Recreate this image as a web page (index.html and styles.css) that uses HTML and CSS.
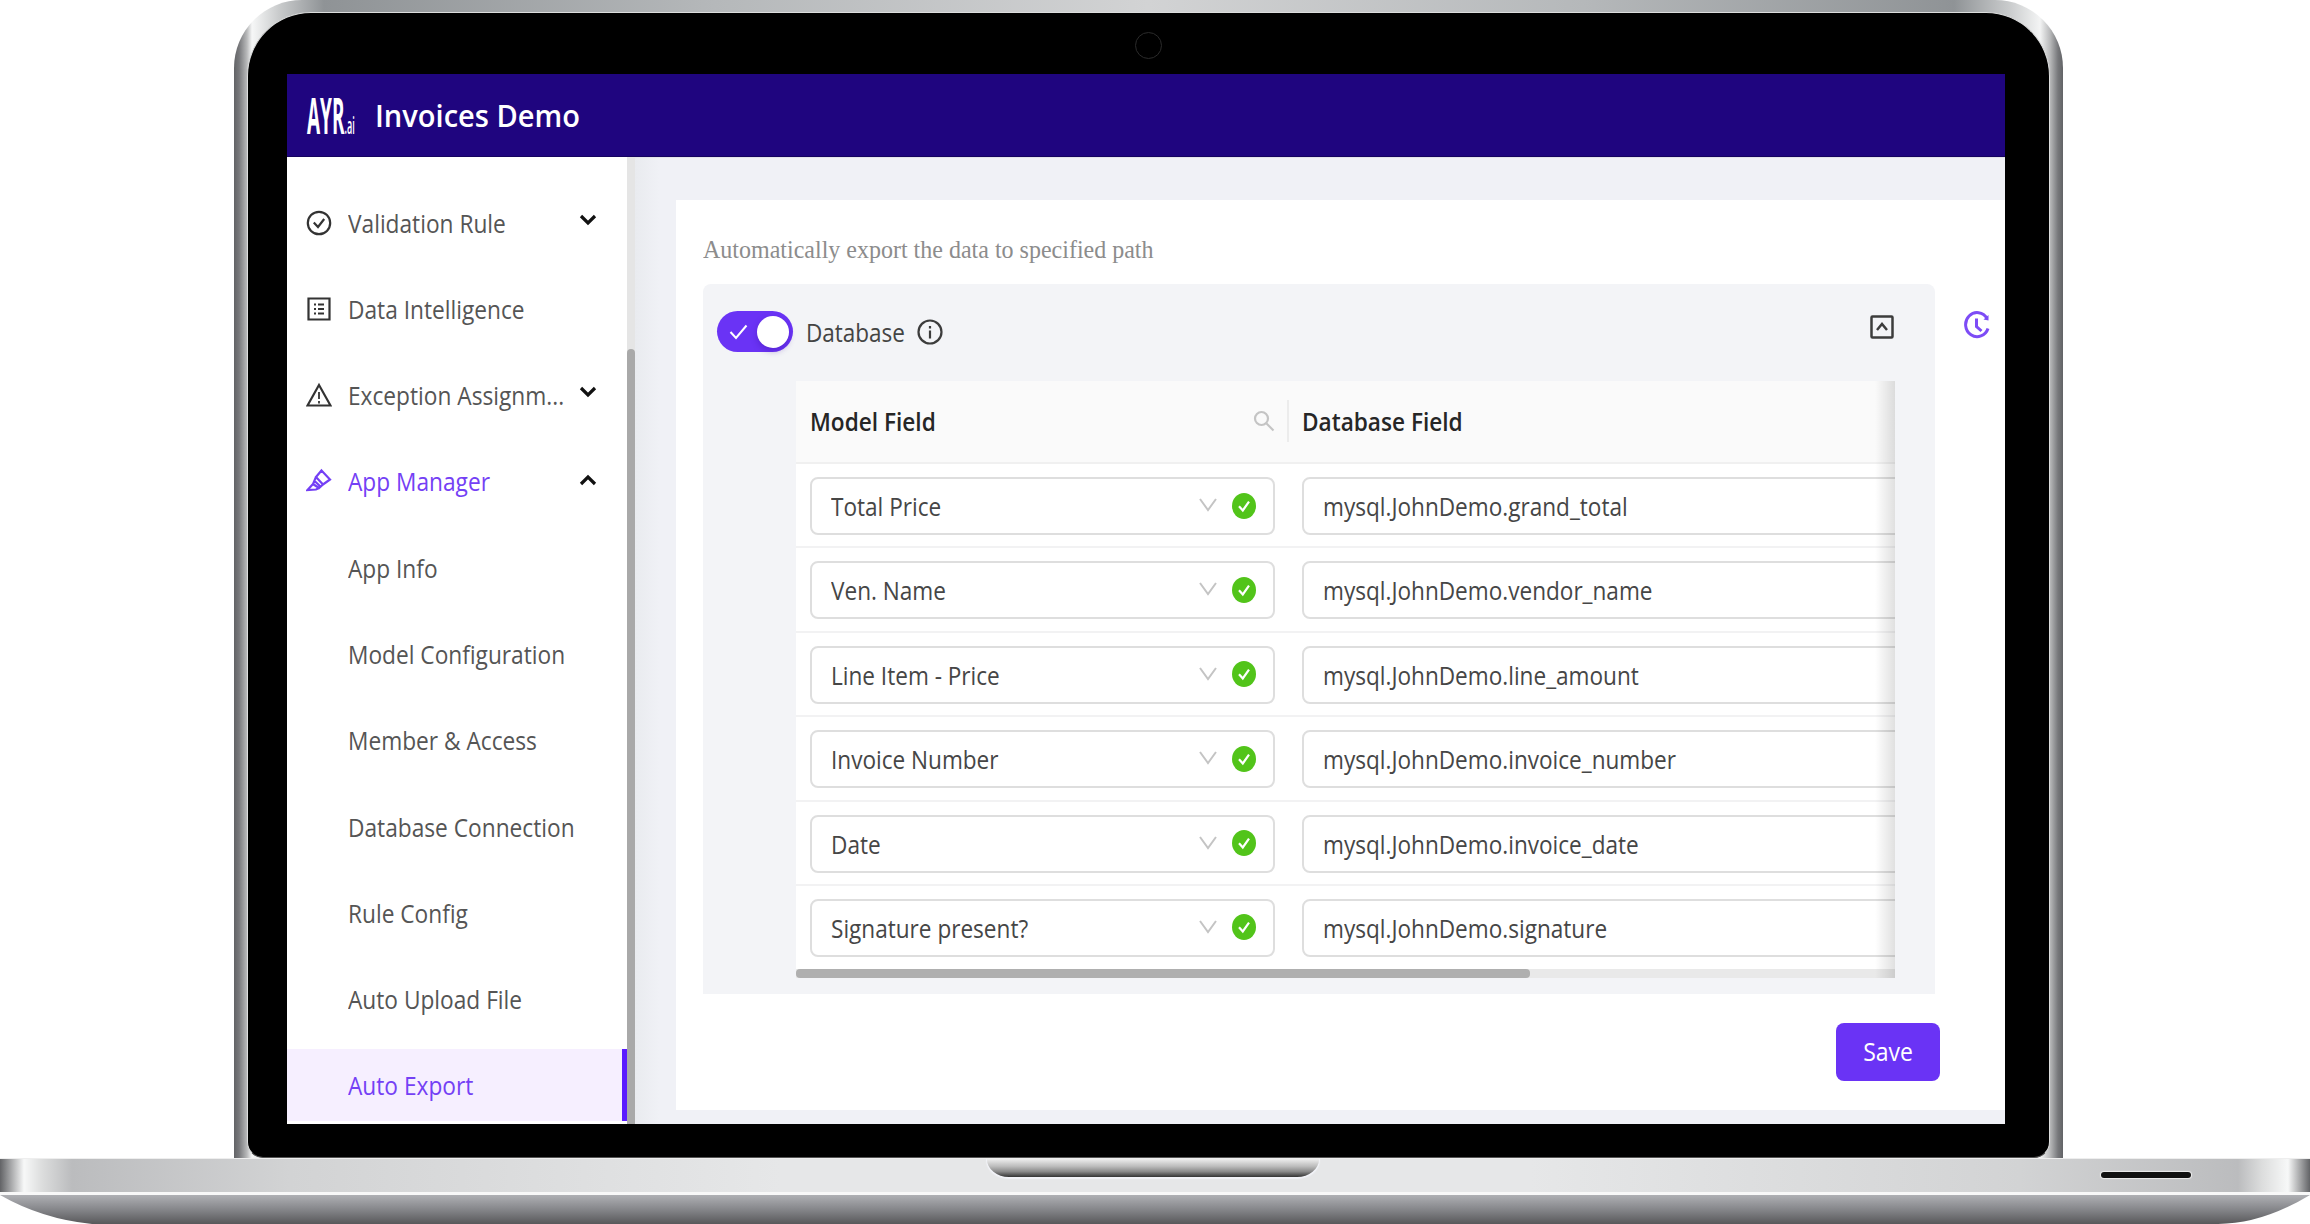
FILE: index.html
```html
<!DOCTYPE html>
<html lang="en">
<head>
<meta charset="utf-8">
<title>Invoices Demo</title>
<link rel="stylesheet" href="styles.css">
</head>
<body>
<svg class="defs" width="0" height="0">
  <symbol id="down" viewBox="0 0 18 14"><path d="M1 1 9 12 17 1" fill="none" stroke="#c4c4c4" stroke-width="2"/></symbol>
  <symbol id="ok" viewBox="0 0 24 26"><ellipse cx="12" cy="13" rx="12" ry="13" fill="#52c41a"/><path d="M7 13.2 10.8 17.5 17 8.7" fill="none" stroke="#fff" stroke-width="2.2"/></symbol>
</svg>
<div class="laptop">
  <div class="lid">
    <div class="bezel">
      <div class="camera"></div>
      <div class="screen">
        <header class="topbar">
          <svg class="logo" width="50" height="72" viewBox="0 0 50 72"><text transform="translate(1 54) scale(.38 1)" font-size="50" font-weight="700">AYR<tspan font-size="24" font-weight="600">.ai</tspan></text></svg>
          <h1><span class="tx">Invoices Demo</span></h1>
        </header>
        <div class="body">
          <nav class="sidebar">
            <a class="item"><svg class="ic" viewBox="0 0 26 26"><circle cx="13" cy="13" r="11.2"/><path d="M7.8 12.5 12 17 18.2 9"/></svg><span class="tx">Validation Rule</span><svg class="arrow" viewBox="0 0 18 12"><path d="M2 2 9 9 16 2"/></svg></a>
            <a class="item"><svg class="ic" viewBox="0 0 26 26"><path d="M2.5 2.5h21v21h-21z"/><path class="thin" d="M8 8.5h2m2 0h6M8 13h2m2 0h6M8 17.500h2m2 0h6"/></svg><span class="tx">Data Intelligence</span></a>
            <a class="item"><svg class="ic" viewBox="0 0 26 26"><path d="M13 3 24.500 23.500H1.500z"/><path class="thin" d="M13 10v7m0 2v2.500"/></svg><span class="tx">Exception Assignm...</span><svg class="arrow" viewBox="0 0 18 12"><path d="M2 2 9 9 16 2"/></svg></a>
            <a class="item on"><svg class="ic" viewBox="0 0 26 26"><path d="M15.500 2.500 24 11.500 17 16.500 10 9zM10 9 7 16 13 20 17 16.500M7 16 1.500 22 10 21.500 13 20M8 12.500 14.500 18.500"/></svg><span class="tx">App Manager</span><svg class="arrow up" viewBox="0 0 18 12"><path d="M2 10 9 3 16 10"/></svg></a>
            <a class="item sub"><span class="tx">App Info</span></a>
            <a class="item sub"><span class="tx">Model Configuration</span></a>
            <a class="item sub"><span class="tx">Member &amp; Access</span></a>
            <a class="item sub"><span class="tx">Database Connection</span></a>
            <a class="item sub"><span class="tx">Rule Config</span></a>
            <a class="item sub"><span class="tx">Auto Upload File</span></a>
            <a class="item sub on selected"><span class="tx">Auto Export</span></a>
          </nav>
          <div class="vtrack"><div class="vthumb"></div></div>
          <main class="main">
            <section class="card">
              <p class="lead"><span class="tx">Automatically export the data to specified path</span></p>
              <div class="cols">
                <div class="panel">
                  <div class="phead">
                    <span class="switch"><svg width="19" height="16" viewBox="0 0 19 16"><path d="M1.500 8 7 14 17.500 1.500" fill="none" stroke="#fff" stroke-width="2"/></svg><i></i></span>
                    <span class="dbname"><span class="tx">Database</span></span>
                    <svg class="info" width="26" height="26" viewBox="0 0 26 26"><circle cx="13" cy="13" r="11.500"/><path d="M13 11.500v8M13 7v2.500"/></svg>
                    <svg class="collapse" width="24" height="24" viewBox="0 0 24 24"><rect x="1.500" y="1.500" width="21" height="21" rx="1"/><path d="M7 15 12 9 17 15"/></svg>
                  </div>
                  <div class="table">
                    <div class="row thead">
                      <div class="c1"><span class="tx">Model Field</span><svg width="22" height="22" viewBox="0 0 22 22"><circle cx="8.500" cy="8.500" r="6.500"/><path d="M13.500 13.500 20.500 20.500"/></svg></div>
                      <div class="c2"><span class="tx">Database Field</span></div>
                    </div>
                    <div class="row"><div class="field"><span class="tx">Total Price</span><svg class="dn"><use href="#down"/></svg><svg class="ok"><use href="#ok"/></svg></div><div class="field db"><span class="tx">mysql.JohnDemo.grand_total</span></div></div>
                    <div class="row"><div class="field"><span class="tx">Ven. Name</span><svg class="dn"><use href="#down"/></svg><svg class="ok"><use href="#ok"/></svg></div><div class="field db"><span class="tx">mysql.JohnDemo.vendor_name</span></div></div>
                    <div class="row"><div class="field"><span class="tx">Line Item - Price</span><svg class="dn"><use href="#down"/></svg><svg class="ok"><use href="#ok"/></svg></div><div class="field db"><span class="tx">mysql.JohnDemo.line_amount</span></div></div>
                    <div class="row"><div class="field"><span class="tx">Invoice Number</span><svg class="dn"><use href="#down"/></svg><svg class="ok"><use href="#ok"/></svg></div><div class="field db"><span class="tx">mysql.JohnDemo.invoice_number</span></div></div>
                    <div class="row"><div class="field"><span class="tx">Date</span><svg class="dn"><use href="#down"/></svg><svg class="ok"><use href="#ok"/></svg></div><div class="field db"><span class="tx">mysql.JohnDemo.invoice_date</span></div></div>
                    <div class="row"><div class="field"><span class="tx">Signature present?</span><svg class="dn"><use href="#down"/></svg><svg class="ok"><use href="#ok"/></svg></div><div class="field db"><span class="tx">mysql.JohnDemo.signature</span></div></div>
                    <div class="htrack"><div class="hthumb"></div></div>
                  </div>
                </div>
                <svg class="clock" width="26" height="28" viewBox="0 0 26 28"><path d="M23 7.500A11.500 12 0 1 0 24 17.500M12.500 7.500v8l5 4.500"/><path class="tip" d="M19.500 8.500 24.500 4v5.500z"/></svg>
              </div>
              <button class="save"><span class="tx">Save</span></button>
            </section>
          </main>
        </div>
      </div>
    </div>
  </div>
  <div class="base">
    <div class="deck"><div class="notch"></div><div class="slot"></div></div>
    <svg class="under" width="2310" height="29" viewBox="0 0 2310 29"><defs><linearGradient id="u" x1="0" y1="0" x2="0" y2="1"><stop offset="0" stop-color="#afb0b4"/><stop offset=".5" stop-color="#85868a"/><stop offset="1" stop-color="#58585a"/></linearGradient></defs><path d="M0 0H2310Q2262 29 2218 29H92Q42 24 0 0z" fill="url(#u)"/></svg>
  </div>
</div>
</body>
</html>
```
FILE: styles.css
```css
* { box-sizing: border-box; }
body { margin: 0; background: #fff; overflow: hidden; font-family: "Open Sans", "Noto Sans", sans-serif; color: #444; }
.defs { position: absolute; }
.laptop { width: 2310px; height: 1224px; display: flex; flex-direction: column; }
.tx { display: inline-block; white-space: nowrap; transform-origin: 0 50%; }

.lid {
  width: 1829px; height: 1158px; margin-left: 233.5px; padding: 12px 13px 0;
  border-radius: 68px 68px 0 0;
  background: linear-gradient(90deg, #626366 0, #77787b 5px, #b9babb 13px, #f6f7f7 18px, #c9cbcc 45px, #8f9396 90px, #b5b8ba 480px, #d2d3d4 914px, #b5b8ba 1350px, #8f9396 1720px, #c9cbcc 1775px, #f3f4f4 1806px, #b9babb 1816px, #77787b 1824px, #626366 1829px);
}
.bezel {
  position: relative; height: 1146px; padding: 61px 43px 33px 39.5px;
  border: 1px solid #dcdddd; border-bottom: 1px solid #555; border-radius: 64px 64px 16px 16px; background: #000;
}
.camera { position: absolute; left: 887px; top: 19px; width: 27px; height: 27px; border: 1px solid #2b2b2b; border-radius: 50%; }
.screen { height: 1050px; width: 1718px; background: #fff; display: flex; flex-direction: column; overflow: hidden; }

.topbar { height: 83px; flex: none; background: #1f057f; border-bottom: 1px solid #15035f; display: flex; align-items: center; padding-left: 19px; }
.logo { fill: #fff; margin-top: 1px; flex: none; overflow: visible; }
h1 { margin: 2px 0 0 19px; font-size: 30px; font-weight: 600; color: #fff; line-height: 40px; }
h1 .tx { transform: scaleX(.968); }

.body { flex: 1; display: flex; min-height: 0; }
.sidebar { width: 340px; padding-top: 29px; flex: none; }
.item { height: 72px; margin-bottom: 14.3px; display: flex; align-items: center; padding: 1px 0 0 19px; font-size: 25px; color: #555; }
.item .tx { transform: scaleX(.908); margin-right: -20px; }
.item.sub { padding-left: 61px; }
.item.on { color: #7440f5; }
.item.selected { background: #f6efff; border-right: 5px solid #5a1cff; }
.ic { width: 26px; height: 26px; margin-right: 16px; flex: none; fill: none; stroke: #333; stroke-width: 2.200; }
.on .ic { stroke: #7440f5; }
.ic .thin { stroke-width: 1.800; }
.arrow { width: 18px; height: 12px; margin: -6px 30px 0 auto; flex: none; fill: none; stroke: #111; stroke-width: 3.200; }
.arrow.up { margin-top: -2px; }
.vtrack { width: 8px; background: #e5e5e5; padding-top: 192px; flex: none; }
.vthumb { height: 780px; background: #a9a9a9; border-radius: 4px 4px 0 0; }

.main { flex: 1; min-width: 0; padding: 42px 0 15px 41px; background: linear-gradient(90deg, #e9ebef 0, #f0f1f6 24px); border-top: 1px solid #e3e4ea; }
.card { height: 910px; padding: 33px 0 0 27px; background: #fff; display: flex; flex-direction: column; }
.lead { margin: 0 0 17px; height: 34px; line-height: 34px; font-family: "Liberation Serif", serif; font-size: 25px; color: #8c8c8c; }
.lead .tx { transform: scaleX(.96); }
.cols { display: flex; }
.panel { width: 1232px; height: 710px; border-radius: 8px 8px 0 0; background: #f3f4f7; padding: 0 40px 0 93px; }
.phead { height: 97px; margin-left: -79px; padding-bottom: 2px; display: flex; align-items: center; }
.switch { width: 76px; height: 41px; border-radius: 21px; background: #6a33f5; display: flex; align-items: center; justify-content: space-between; padding: 0 4px 0 12px; }
.switch i { width: 32px; height: 32px; border-radius: 50%; background: #fff; box-shadow: 0 3px 6px #3a10a060; }
.dbname { margin-left: 13px; width: 111px; font-size: 25px; }
.dbname .tx { transform: scaleX(.9); }
.info, .collapse { fill: none; stroke: #3c3c3c; stroke-width: 2.200; }
.collapse { margin: -9px 1px 0 auto; stroke-width: 2.500; }
.table { position: relative; width: 1099px; background: #fff; overflow: hidden; }
.table::after { content: ""; position: absolute; right: 0; top: 0; width: 20px; height: 100%; background: linear-gradient(90deg, #0000, #0000001f); }
.row { height: 84.400px; display: flex; padding: 13px 0 0 14px; gap: 27px; border-bottom: 2px solid #f2f2f3; }
.row:nth-child(7) { border-bottom: 0; height: 83px; }
.row.thead { height: 83px; padding: 0 0 1px 14px; gap: 0; background: #fafafa; align-items: center; font-size: 25px; font-weight: 600; color: #262626; border-bottom-color: #f0f0f0; }
.thead .tx { transform: scaleX(.905); }
.c1 { width: 479px; height: 42px; border-right: 2px solid #ececec; padding-right: 12px; display: flex; align-items: center; justify-content: space-between; }
.c1 svg { fill: none; stroke: #c4c4c4; stroke-width: 2.200; }
.c2 { padding-left: 13px; }
.field { width: 465px; height: 58px; flex: none; border: 2px solid #dedede; border-radius: 8px; display: flex; align-items: center; padding: 0 17px 0 19px; font-size: 25px; color: #464646; }
.field .tx { transform: scaleX(.903); }
.field.db { width: 900px; }
.dn { width: 18px; height: 14px; margin: -2px 15px 0 auto; }
.ok { width: 24px; height: 26px; margin-top: -1px; }
.htrack { height: 9px; background: #e9e9e9; }
.hthumb { width: 734px; height: 9px; background: #afafaf; border-radius: 4px; }
.clock { margin: 27px 0 0 29px; fill: none; stroke: #7d4cf6; stroke-width: 3; }
.clock .tip { fill: #7d4cf6; stroke: none; }
.save { width: 104px; height: 58px; margin: 29px 0 0 1133px; border: 0; border-radius: 8px; background: #6a33f5; color: #fff; font: 25px "Open Sans", sans-serif; padding: 0 0 3px; }
.save .tx { transform: scaleX(.92); transform-origin: 50% 50%; }

.base { display: flex; flex-direction: column; }
.deck {
  position: relative; height: 37px; border-top: 1px solid #eee; border-bottom: 3px solid #f8f8f8;
  background: linear-gradient(90deg, #626366 0, #f7f8f8 24px, #dcdddd 42px, #bbbcbe 72px, #d2d3d4 290px, #e6e7e8 780px, #e6e7e8 1530px, #d2d3d4 2020px, #bbbcbe 2238px, #dcdddd 2262px, #f7f8f8 2288px, #626366 2310px);
}
.notch { position: absolute; left: 987px; top: 0; width: 332px; height: 18px; border-radius: 0 0 22px 22px / 0 0 18px 18px; background: linear-gradient(#eee 0, #bdbdbd 40%, #8a8a8a 70%, #333 100%); box-shadow: 0 1px 1px 1px #f2f3f8; clip-path: inset(0 -3px -3px -3px); }
.slot { position: absolute; left: 2101px; top: 13px; width: 90px; height: 6px; border-radius: 3px; background: #111; box-shadow: 0 0 1px 1px #eee; }
.under { display: block; }
```
